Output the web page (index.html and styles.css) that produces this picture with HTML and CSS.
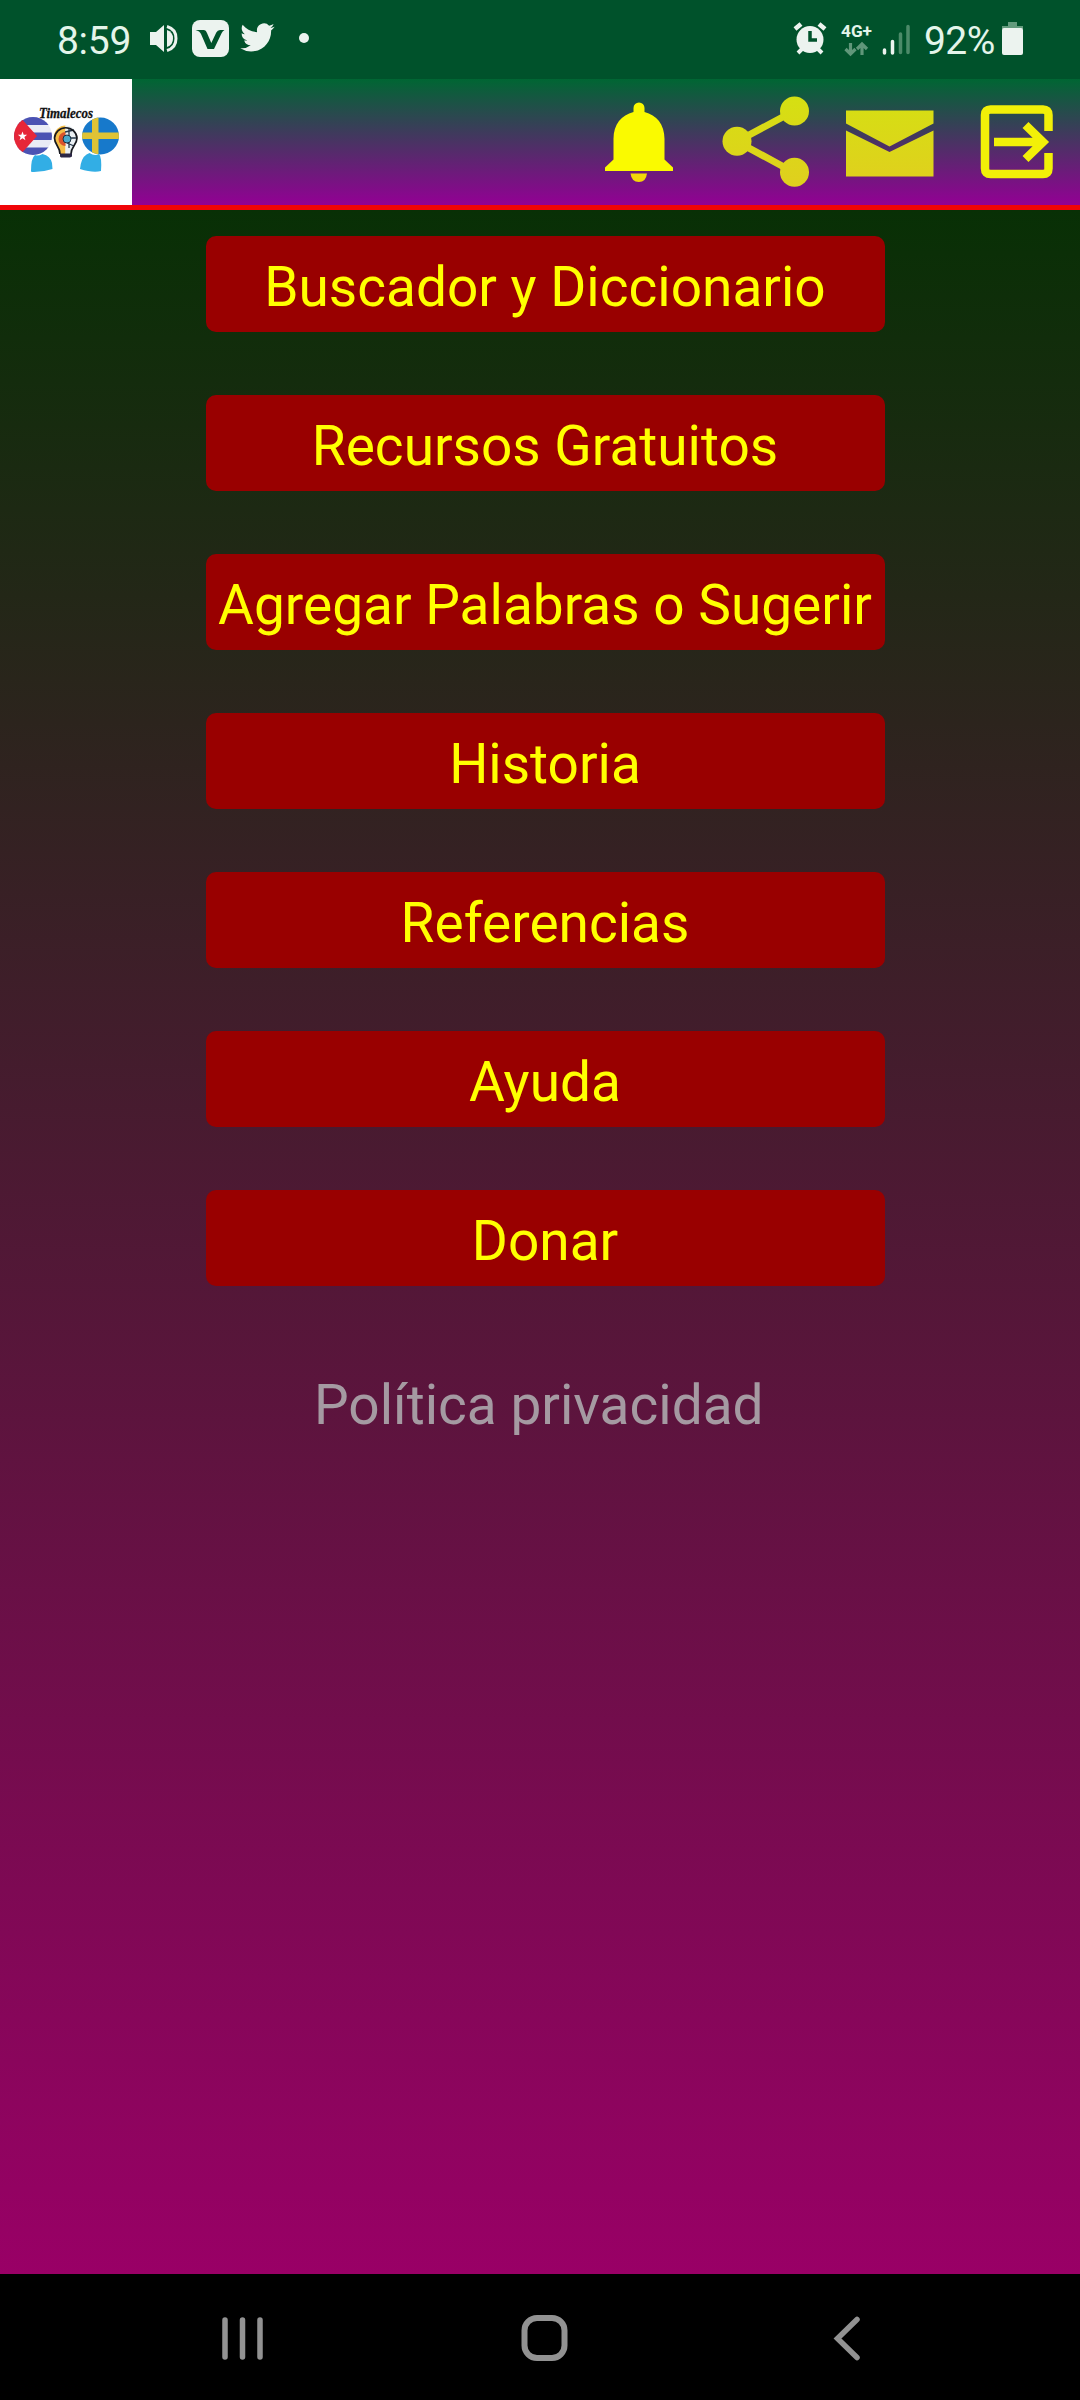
FILE: index.html
```html
<!DOCTYPE html>
<html lang="es">
<head>
<meta charset="utf-8">
<title>Timalecos</title>
<link rel="stylesheet" href="styles.css">
</head>
<body>
<div class="screen">
  <div class="status">
    <span class="clock">8:59</span>
    <svg class="status-left" viewBox="140 0 180 79" width="180" height="79">
      <path d="M150 32h6l8-7v27l-8-7h-6z" fill="#ecf3ef"/>
      <path d="M167 30q6 2 6 8.500t-6 8.500z" fill="#ecf3ef"/>
      <path d="M167 26.500q9 2.500 9 12t-9 12" fill="none" stroke="#ecf3ef" stroke-width="3"/>
      <rect x="192" y="20" width="37" height="37" rx="8" fill="#ecf3ef"/>
      <path d="M195.500 30H204q2 0 3 3l4.300 10 5-10.500q1.200-2.500 3.700-2.500h4.500q-1.800 1-2.800 3L214 49h-6.500l-6.500-15q-1.200-3-5.500-4z" fill="#00522b"/>
      <path transform="translate(240.300 20.300) scale(1.430)" d="M23.950 4.570a10 10 0 0 1-2.820.770 4.960 4.960 0 0 0 2.160-2.720 10 10 0 0 1-3.120 1.190 4.920 4.920 0 0 0-8.390 4.480C7.690 8.100 4.070 6.130 1.640 3.160a4.820 4.820 0 0 0-.670 2.480c0 1.710.870 3.210 2.190 4.100a4.900 4.900 0 0 1-2.230-.620v.060a4.920 4.920 0 0 0 3.950 4.830 5 5 0 0 1-2.210.080 4.940 4.940 0 0 0 4.600 3.420A9.870 9.870 0 0 1 0 19.540a14 14 0 0 0 7.550 2.210c9.050 0 14-7.500 14-13.980 0-.210 0-.420-.020-.630a9.940 9.940 0 0 0 2.460-2.550z" fill="#ecf3ef"/>
      <circle cx="304" cy="38" r="5" fill="#ecf3ef"/>
    </svg>
    <svg class="status-right" viewBox="790 0 124 79" width="124" height="79">
      <circle cx="810" cy="39.500" r="13.500" fill="#ecf3ef"/>
      <path d="M795 29l6-5M825 29l-6-5" stroke="#ecf3ef" stroke-width="4.500"/>
      <path d="M803 48l-5 5M817 48l5 5" stroke="#ecf3ef" stroke-width="4"/>
      <path d="M810 31v9h7" fill="none" stroke="#00522b" stroke-width="3.500"/>
      <text x="841" y="37" class="network" textLength="31" lengthAdjust="spacingAndGlyphs">4G+</text>
      <path d="M850.500 43v11M845.500 49l5 5 5-5M862 55V44M857 49l5-5 5 5" fill="none" stroke="#60977a" stroke-width="3.200"/>
      <path d="M884.500 50v3M892.500 41.500V53" stroke="#ecf3ef" stroke-width="3.500" stroke-linecap="round"/>
      <path d="M900.500 34v18.500M908 26.500v26" stroke="#4c8a69" stroke-width="3.500" stroke-linecap="round"/>
    </svg>
    <span class="percent">92%</span>
    <svg class="battery" viewBox="0 0 21 33" width="21" height="33">
      <path d="M6 0h9v4h6v3H0V4h6z" fill="#639b7d"/>
      <rect y="6" width="21" height="27" rx="2" fill="#ecf3ef"/>
    </svg>
  </div>

  <header class="header">
    <svg class="logo" viewBox="0 79 132 126" width="132" height="126">
      <defs>
        <clipPath id="cuba"><circle cx="33" cy="136" r="19"/></clipPath>
        <clipPath id="sweden"><circle cx="100.500" cy="136" r="18.500"/></clipPath>
        <clipPath id="bulb"><path d="M60 154C60 146 54 145 54 137a11.500 11.500 0 0 1 23 0c0 8-6 9-6 17z"/></clipPath>
      </defs>
      <rect y="79" width="132" height="126" fill="#fff"/>
      <g clip-path="url(#cuba)">
        <path d="M14 117h38v38H14z" fill="#e9ebf5"/>
        <path d="M14 117h38v8H14zM14 132.500h38v7.500H14zM14 147.500h38v8H14z" fill="#4b52b3"/>
        <path d="M14 117h6l17 19-17 19h-6z" fill="#e62638"/>
      </g>
      <path d="M22.500 131.500l1.200 3.200h3.400l-2.700 2.200 1 3.400-2.900-2-2.900 2 1-3.400-2.700-2.200h3.400z" fill="#fff"/>
      <g clip-path="url(#sweden)">
        <path d="M82 117h38v38H82z" fill="#1779cb"/>
        <path d="M92 117h6.500v38H92zM82 132.500h38v6.500H82z" fill="#dfc335"/>
      </g>
      <path d="M31 171q0-13 4-16 3 1.500 7.500-1 8 2 9.500 9l.500 6q-11 3.500-21 3zM80 169q1-11 6.500-14.500l3-1.500q5 3.500 9.500 1 3 3 2 17-8 2-21-2z" fill="#32aee5"/>
      <g clip-path="url(#bulb)">
        <path d="M54 125h11.500v29H54z" fill="#f4bd47"/>
        <path d="M65.500 125H78v29H65.500z" fill="#eaf0f4"/>
        <path d="M65.500 132a7 7 0 1 0 0 14z" fill="#d9532c"/>
        <path d="M69 128v20M65 132l9-2M66 138h11M67 143l7 3" stroke="#26384b" stroke-width="1.300"/>
      </g>
      <circle cx="67" cy="139" r="4" fill="#4aa9cc" stroke="#203040"/>
      <path d="M60 154C60 146 54.500 145 54.500 138a11.300 11.300 0 0 1 22.500 0c0 7-6 8-6 16" fill="none" stroke="#17191f" stroke-width="1.700"/>
      <path d="M60 153.500h12v3l-2 1H61l-1-1z" fill="#2c2745"/>
      <text x="39" y="117.500" class="wordmark" textLength="54" lengthAdjust="spacingAndGlyphs">Timalecos</text>
    </svg>
    <svg class="actions" viewBox="600 79 480 125" width="480" height="125">
      <defs>
        <linearGradient id="gold" gradientUnits="userSpaceOnUse" x1="0" y1="95" x2="0" y2="187">
          <stop stop-color="#d5e012"/><stop offset="1" stop-color="#e0cf1e"/>
        </linearGradient>
      </defs>
      <path d="M633.500 112v-4a5.500 5.500 0 0 1 11 0v4c12 3 20 12 20 27v20.500l8.500 8v3.500H605v-3.500l8.500-8V139c0-15 8-24 20-27z" fill="#fafa00"/>
      <path d="M630.500 173.500h16.500q-1 8.500-8.200 8.500t-8.300-8.500z" fill="#f3d807"/>
      <path d="M794 111l-57 30.500 57 31" fill="none" stroke="url(#gold)" stroke-width="7"/>
      <g fill="url(#gold)">
        <circle cx="794.500" cy="111" r="14.500"/><circle cx="737" cy="141.300" r="14.500"/><circle cx="794.500" cy="172.300" r="14.500"/>
        <path d="M846 110.500h87.500v13l-44 23-43.500-23zM846 130.500l43.500 21.500 44-21.500v46H846z"/>
      </g>
      <path d="M1048.500 131v-16q0-5.500-5.500-5.500h-52.500q-5.500 0-5.500 5.500v53.500q0 5.500 5.500 5.500H1043q5.500 0 5.500-5.500V153" fill="none" stroke="#f2f008" stroke-width="8.500"/>
      <path d="M994 142h48M1025.500 125l17.500 17-17.500 17" fill="none" stroke="#f2f008" stroke-width="8.500"/>
    </svg>
  </header>

  <main class="content">
    <nav class="menu">
      <button class="item">Buscador y Diccionario</button>
      <button class="item">Recursos Gratuitos</button>
      <button class="item">Agregar Palabras o Sugerir</button>
      <button class="item">Historia</button>
      <button class="item">Referencias</button>
      <button class="item">Ayuda</button>
      <button class="item">Donar</button>
    </nav>
    <a class="privacy">Política privacidad</a>
  </main>

  <footer class="navbar">
    <svg viewBox="0 2274 1080 126" width="1080" height="126" fill="none" stroke="#929292" stroke-width="6">
      <path d="M225 2320v37M242.500 2320v37M260 2320v37" stroke-width="5.500" stroke-linecap="round"/>
      <rect x="524.500" y="2318" width="40" height="40" rx="12.500"/>
      <path d="M857 2319.500l-19.500 19 19.500 19" stroke-width="5.500" stroke-linecap="round"/>
    </svg>
  </footer>
</div>
</body>
</html>
```
FILE: styles.css
```css
* { box-sizing: border-box; }

body {
  margin: 0;
  font-family: Roboto, "Liberation Sans", sans-serif;
}

svg { display: block; flex: none; }

.screen {
  display: flex;
  flex-direction: column;
  width: 1080px;
  height: 2400px;
  overflow: hidden;
}

.status {
  display: flex;
  align-items: flex-start;
  height: 79px;
  padding-left: 57px;
  background: #00522b;
  color: #e4f5ea;
  font-size: 39px;
  line-height: 46px;
}

.clock { width: 83px; padding-top: 18px; white-space: nowrap; letter-spacing: -0.3px; }
.status-right { margin-left: 470px; }
.percent { width: 77px; margin-left: 10px; padding-top: 18px; white-space: nowrap; letter-spacing: -0.6px; }
.battery { margin: 22px 0 0 1px; }

.network {
  font-size: 17px;
  font-weight: 700;
  fill: #e4f5ea;
}

.header {
  display: flex;
  justify-content: space-between;
  height: 131px;
  border-bottom: 5px solid #f00508;
  background: linear-gradient(#006633, #930094);
}

.wordmark {
  font: italic 700 14.5px "Liberation Serif", serif;
  fill: #111;
  stroke: #111;
  stroke-width: 0.3px;
}

.content {
  display: flex;
  flex: 1;
  flex-direction: column;
  padding-top: 26px;
  background: linear-gradient(#083005, #990066);
}

.menu {
  display: flex;
  flex-direction: column;
  gap: 63px;
  width: 679px;
  margin-left: 206px;
}

.item {
  height: 96px;
  padding: 5px 1px 0 0;
  border: 0;
  border-radius: 10px;
  background: #990000;
  color: #ffff00;
  font: 55px/64px Roboto, "Liberation Sans", sans-serif;
  white-space: nowrap;
}

.privacy {
  margin: 87px 0 0 314px;
  color: #a59aa2;
  font-size: 55px;
  line-height: 64px;
}

.navbar {
  height: 126px;
  background: #000;
}
```
